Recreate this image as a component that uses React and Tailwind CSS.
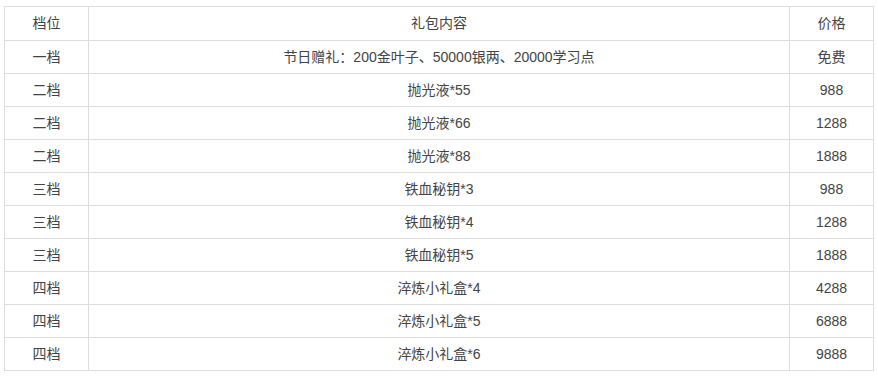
const rows = [
  ["一档", "节日赠礼：200金叶子、50000银两、20000学习点", "免费"],
  ["二档", "抛光液*55", "988"],
  ["二档", "抛光液*66", "1288"],
  ["二档", "抛光液*88", "1888"],
  ["三档", "铁血秘钥*3", "988"],
  ["三档", "铁血秘钥*4", "1288"],
  ["三档", "铁血秘钥*5", "1888"],
  ["四档", "淬炼小礼盒*4", "4288"],
  ["四档", "淬炼小礼盒*5", "6888"],
  ["四档", "淬炼小礼盒*6", "9888"],
];

export default function App() {
  return (
    <div className="w-[878px] h-[376px] bg-white pl-[4px] pt-[6px] font-['Liberation_Sans','Noto_Sans_CJK_SC',sans-serif] text-[14px] text-[#444]">
      <table className="w-[870px] border-collapse table-fixed">
        <colgroup>
          <col className="w-[84px]" />
          <col className="w-[701px]" />
          <col className="w-[84px]" />
        </colgroup>
        <thead>
          <tr className="h-[34px]">
            <th className="border border-[#ddd] font-normal text-center">档位</th>
            <th className="border border-[#ddd] font-normal text-center">礼包内容</th>
            <th className="border border-[#ddd] font-normal text-center">价格</th>
          </tr>
        </thead>
        <tbody>
          {rows.map((r, i) => (
            <tr key={i} className="h-[33px]">
              <td className="border border-[#ddd] text-center">{r[0]}</td>
              <td className="border border-[#ddd] text-center">{r[1]}</td>
              <td className="border border-[#ddd] text-center">{r[2]}</td>
            </tr>
          ))}
        </tbody>
      </table>
    </div>
  );
}
